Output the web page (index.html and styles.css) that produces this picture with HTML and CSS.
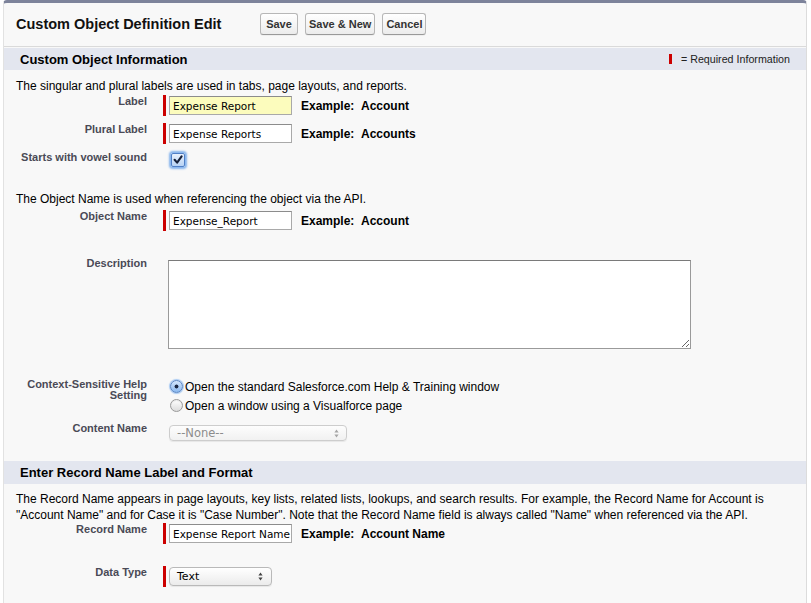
FILE: index.html
```html
<!DOCTYPE html>
<html lang="en">
<head>
<meta charset="utf-8">
<title>Custom Object Definition Edit</title>
<link rel="stylesheet" href="styles.css">
</head>
<body>
<div class="page">
  <div class="head">
    <h1 class="title">Custom Object Definition Edit</h1>
    <div class="btns">
      <button class="btn" type="button">Save</button>
      <button class="btn" type="button">Save &amp; New</button>
      <button class="btn" type="button">Cancel</button>
    </div>
  </div>

  <div class="sec-head sec-head-first">
    <h2 class="sec-title">Custom Object Information</h2>
    <span class="legend"><span class="legend-mark"></span>= Required Information</span>
  </div>
  <div class="sec-body">
    <p class="intro intro-first">The singular and plural labels are used in tabs, page layouts, and reports.</p>

    <div class="row row-first">
      <div class="lbl">Label</div>
      <div class="fld"><span class="req"><span class="txt txt-hl" role="textbox">Expense Report</span></span><span class="example">Example:&nbsp;&nbsp;Account</span></div>
    </div>
    <div class="row row-next">
      <div class="lbl">Plural Label</div>
      <div class="fld"><span class="req"><span class="txt" role="textbox">Expense Reports</span></span><span class="example">Example:&nbsp;&nbsp;Accounts</span></div>
    </div>
    <div class="row row-next">
      <div class="lbl">Starts with vowel sound</div>
      <div class="fld fld-chk"><span class="chk"><svg width="12" height="12" viewBox="0 0 12 12"><path d="M2.6 5.8 L5.1 8.6 L9.6 2.4" fill="none" stroke="#16213a" stroke-width="2.1" stroke-linecap="round" stroke-linejoin="round"/></svg></span></div>
    </div>

    <p class="intro intro-api">The Object Name is used when referencing the object via the API.</p>
    <div class="row row-api">
      <div class="lbl">Object Name</div>
      <div class="fld"><span class="req"><span class="txt" role="textbox">Expense_Report</span></span><span class="example">Example:&nbsp;&nbsp;Account</span></div>
    </div>

    <div class="row row-desc">
      <div class="lbl">Description</div>
      <div class="fld fld-pad"><textarea class="area" readonly></textarea></div>
    </div>

    <div class="row row-help">
      <div class="lbl lbl-help">Context-Sensitive Help Setting</div>
      <div class="fld fld-radios">
        <div class="radio-line"><span class="radio radio-on"></span>Open the standard Salesforce.com Help &amp; Training window</div>
        <div class="radio-line"><span class="radio"></span>Open a window using a Visualforce page</div>
      </div>
    </div>

    <div class="row row-content">
      <div class="lbl">Content Name</div>
      <div class="fld fld-pad"><div class="sel sel-off"><span>--None--</span><svg width="5" height="9" viewBox="0 0 5 9"><path d="M2.5 0.5 L4.6 3.4 H0.4Z M2.5 8.5 L4.6 5.6 H0.4Z" fill="#a5a5a5"/></svg></div></div>
    </div>
  </div>

  <div class="sec-head sec-head-second">
    <h2 class="sec-title">Enter Record Name Label and Format</h2>
  </div>
  <div class="sec-body">
    <p class="intro intro-record">The Record Name appears in page layouts, key lists, related lists, lookups, and search results. For example, the Record Name for Account is "Account Name" and for Case it is "Case Number". Note that the Record Name field is always called "Name" when referenced via the API.</p>
    <div class="row row-record">
      <div class="lbl">Record Name</div>
      <div class="fld"><span class="req"><span class="txt" role="textbox">Expense Report Name</span></span><span class="example">Example:&nbsp;&nbsp;Account Name</span></div>
    </div>
    <div class="row row-type">
      <div class="lbl">Data Type</div>
      <div class="fld"><span class="req"><span class="sel sel-type"><span>Text</span><svg width="5" height="9" viewBox="0 0 5 9"><path d="M2.5 0.5 L4.6 3.4 H0.4Z M2.5 8.5 L4.6 5.6 H0.4Z" fill="#444"/></svg></span></span></div>
    </div>
  </div>
</div>
</body>
</html>
```

FILE: styles.css
```css
html, body {
  margin: 0;
  padding: 0;
  background: #ffffff;
}

body {
  font-family: "Liberation Sans", Arial, sans-serif;
  font-size: 12px;
  color: #000;
}

.page {
  margin: 0 4px 0 3px;
  background: #f8f8f8;
  border-top: 3px solid #7d839b;
  border-left: 1px solid #e2e2e2;
  border-right: 1px solid #dcdcdc;
  border-radius: 4px 4px 0 0;
  padding-bottom: 30px;
}

/* ---------- page header ---------- */
.head {
  display: flex;
  align-items: center;
  height: 44px;
  padding: 0 12px 1px;
  border-bottom: 1px solid #dadada;
  box-sizing: border-box;
}

.title {
  flex: 0 0 244px;
  margin: 0;
  font-size: 14.5px;
  font-weight: bold;
  color: #111;
  line-height: 18px;
}

.btns {
  display: flex;
  gap: 7px;
}

.btn {
  height: 22px;
  min-width: 38px;
  padding: 0 3px;
  font-family: "Liberation Sans", Arial, sans-serif;
  font-size: 11px;
  font-weight: bold;
  color: #333;
  background: linear-gradient(#ffffff, #ececec);
  border: 1px solid #b7b7b7;
  border-bottom-color: #999;
  border-radius: 3px;
  box-shadow: 0 1px 0 rgba(0, 0, 0, 0.04);
}

/* ---------- section headers ---------- */
.sec-head {
  display: flex;
  align-items: center;
  justify-content: space-between;
  background: #e3e6ef;
  padding: 0 16px;
}

.sec-head-first {
  height: 22px;
  margin-top: 1px;
}

.sec-head-second {
  height: 23px;
  margin-top: 20px;
}

.sec-title {
  margin: 0;
  font-size: 13px;
  font-weight: bold;
  color: #000;
}

.legend {
  display: flex;
  align-items: center;
  font-size: 10.7px;
  color: #222;
}

.legend-mark {
  width: 3px;
  height: 10px;
  background: #c00;
  margin-right: 9px;
}

/* ---------- section body ---------- */
.sec-body {
  display: flex;
  flex-direction: column;
}

.intro {
  margin: 0;
  padding-left: 12px;
  padding-right: 12px;
  line-height: 15px;
  font-size: 12px;
}

.intro-first { margin-top: 9px; }
.intro-api { margin-top: 20px; }
.intro-record { margin-top: 7px; line-height: 16px; }

.row {
  display: grid;
  grid-template-columns: 143px 1fr;
  column-gap: 16px;
}

.row-first { margin-top: 1px; }
.row-next { margin-top: 7px; }
.row-api { margin-top: 3px; }
.row-desc { margin-top: 26px; }
.row-help { margin-top: 28px; }
.row-content { margin-top: 7px; }
.row-record { margin-top: 0; }
.row-type { margin-top: 22px; }

.lbl {
  text-align: right;
  font-size: 11px;
  font-weight: bold;
  line-height: 13px;
  color: #4a4a56;
}

.lbl-help {
  padding-top: 2px;
  line-height: 11px;
}

.fld {
  display: flex;
  align-items: center;
  min-height: 21px;
}

.fld-pad {
  align-items: flex-start;
  min-height: 0;
  padding-top: 3px;
}

.req {
  display: flex;
  align-items: center;
  height: 21px;
  border-left: 3px solid #c00;
  padding-left: 3px;
}

.txt {
  display: flex;
  align-items: center;
  width: 123px;
  height: 19px;
  box-sizing: border-box;
  padding: 0 2px 0 3px;
  overflow: hidden;
  white-space: nowrap;
  font-family: "DejaVu Sans", "Liberation Sans", sans-serif;
  font-size: 10.5px;
  color: #000;
  background: #fff;
  border: 1px solid #a9a9a9;
  border-top-color: #8c8c8c;
}

.txt-hl {
  background: #fcfcbd;
}

.example {
  margin-left: 9px;
  font-size: 12px;
  font-weight: bold;
  color: #000;
}

/* checkbox */
.fld-chk {
  align-items: flex-start;
}

.chk {
  display: flex;
  align-items: center;
  justify-content: center;
  width: 12px;
  height: 12px;
  margin: 2px 0 0 8px;
  border: 1px solid #4f7fc6;
  border-radius: 2px;
  background: linear-gradient(#e8f1fd, #b8d3f4);
  box-shadow: 0 0 2px 2px #86b4ec;
}

/* textarea */
.area {
  display: block;
  width: 523px;
  height: 89px;
  box-sizing: border-box;
  margin: 0 0 0 5px;
  padding: 2px;
  border: 1px solid #9a9a9a;
  border-top-color: #7a7a7a;
  background: #fff;
  font-family: "DejaVu Sans", sans-serif;
  font-size: 11px;
  outline: none;
}

/* radios */
.fld-radios {
  flex-direction: column;
  align-items: flex-start;
}

.radio-line {
  display: flex;
  align-items: center;
  height: 19px;
  font-size: 12px;
  color: #000;
}

.radio {
  width: 11px;
  height: 11px;
  margin: 0 2px 0 7px;
  border: 1px solid #9a9a9a;
  border-radius: 50%;
  background: linear-gradient(#ffffff, #dcdcdc);
  box-shadow: inset 0 1px 1px rgba(0, 0, 0, 0.08);
}

.radio-on {
  border-color: #5a86c4;
  background: radial-gradient(circle, #1a2742 0, #1a2742 1.6px, transparent 2.3px), linear-gradient(#d4e6fc, #8cb9ef);
  box-shadow: 0 0 1px 1px #a6c8f2;
}

/* selects */
.sel {
  display: flex;
  align-items: center;
  justify-content: space-between;
  box-sizing: border-box;
  padding: 0 7px;
  border: 1px solid #b9b9b9;
  border-radius: 4px;
  background: linear-gradient(#ffffff, #ebebeb);
  box-shadow: 0 1px 1px rgba(0, 0, 0, 0.07);
  font-family: "DejaVu Sans", "Liberation Sans", sans-serif;
}

.sel-off {
  width: 178px;
  height: 16px;
  margin-left: 6px;
  font-size: 11.5px;
  color: #8c8c8c;
  border-color: #cdcdcd;
  background: linear-gradient(#fdfdfd, #f1f1f1);
}

.sel-type {
  width: 103px;
  height: 19px;
  font-size: 11px;
  color: #000;
  padding-right: 8px;
}
```
